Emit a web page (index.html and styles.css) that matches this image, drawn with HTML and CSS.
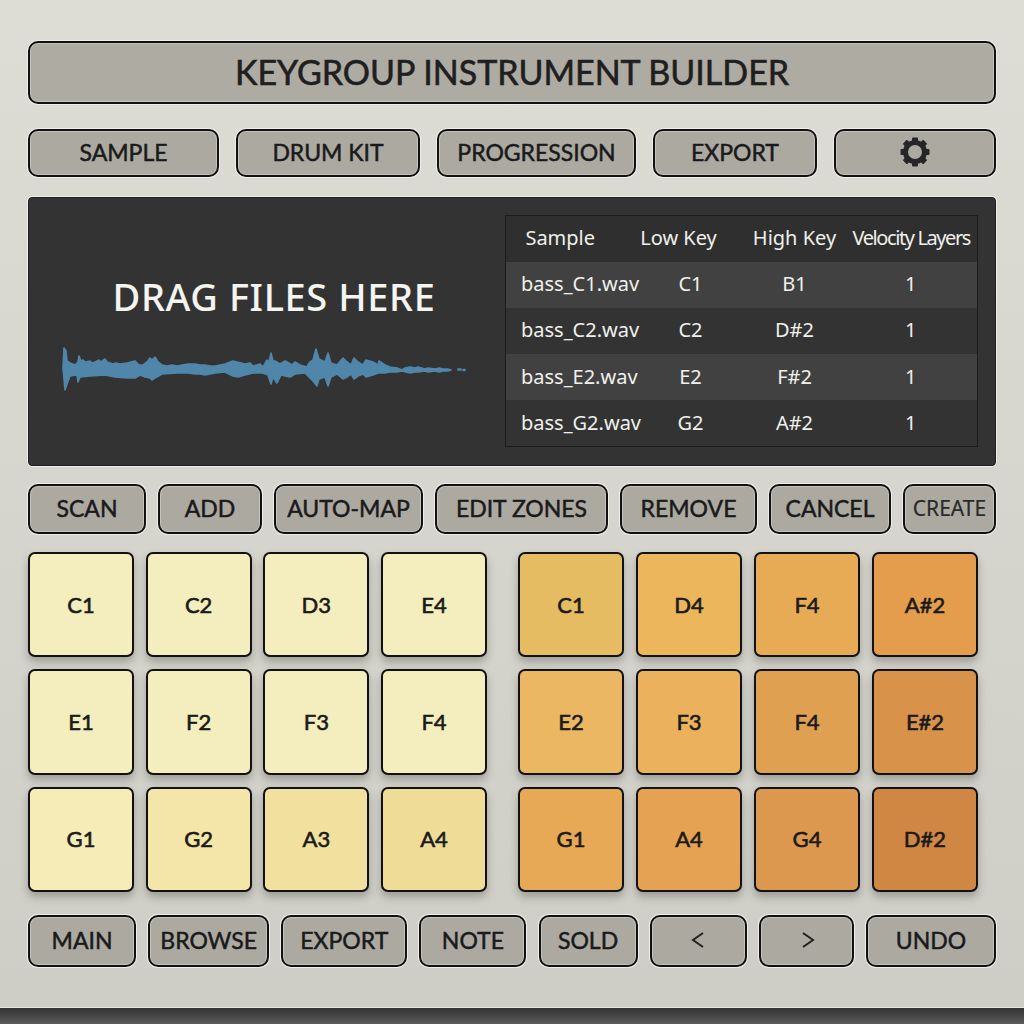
FILE: index.html
```html
<!DOCTYPE html>
<html lang="en">

<head>
  <meta charset="UTF-8">
  <meta name="viewport" content="width=device-width, initial-scale=1.0">
  <title>Keygroup Instrument Builder</title>
  <link rel="stylesheet" href="styles.css">
</head>

<body>
  <div id="whole">
    <h1 class="title">KEYGROUP INSTRUMENT BUILDER</h1>

    <div class="btn-row row-top">
      <button class="btn w-sample">SAMPLE</button>
      <button class="btn w-drum">DRUM KIT</button>
      <button class="btn w-prog">PROGRESSION</button>
      <button class="btn w-export">EXPORT</button>
      <button class="btn w-gear" aria-label="Settings">
        <svg class="gear" viewBox="0 0 30 30" width="30" height="30">
          <circle cx="15" cy="15" r="9.5" fill="none" stroke="#262626" stroke-width="5" />
          <g fill="#262626">
            <rect x="12" y="0.5" width="6" height="6" rx="1" />
            <rect x="12" y="0.5" width="6" height="6" rx="1" transform="rotate(45 15 15)" />
            <rect x="12" y="0.5" width="6" height="6" rx="1" transform="rotate(90 15 15)" />
            <rect x="12" y="0.5" width="6" height="6" rx="1" transform="rotate(135 15 15)" />
            <rect x="12" y="0.5" width="6" height="6" rx="1" transform="rotate(180 15 15)" />
            <rect x="12" y="0.5" width="6" height="6" rx="1" transform="rotate(225 15 15)" />
            <rect x="12" y="0.5" width="6" height="6" rx="1" transform="rotate(270 15 15)" />
            <rect x="12" y="0.5" width="6" height="6" rx="1" transform="rotate(315 15 15)" />
          </g>
        </svg>
      </button>
    </div>

    <div class="screen">
      <div class="drop">
        <div class="drop-text">DRAG FILES HERE</div>
        <svg class="wave" viewBox="0 0 420 56" width="420" height="56">
          <path fill="#4f86a9" stroke="#4f86a9" stroke-width="1.6" stroke-linejoin="round" d="M8 28 L9 8 L11 11 L12 21 L15 23 L20 25 L23 22 L24 16 L26 21 L28 20 L30 22 L35 21 L37 23 L40 22 L44 20 L46 22 L50 19 L52 22 L58 24 L61 23 L65 24 L72 23 L80 21 L84 25 L88 25 L92 22 L95 18 L97 20 L100 17 L103 22 L107 25 L112 26 L117 25 L122 26 L133 24 L140 24 L145 25 L150 25 L155 26 L160 26 L170 24 L178 21 L182 22 L190 24 L195 23 L198 26 L205 24 L208 27 L212 20 L214 22 L216 13 L218 21 L220 21 L225 24 L230 21 L232 22 L237 25 L240 22 L245 25 L252 27 L254 23 L258 20 L261 9 L264 19 L270 22 L273 13 L276 23 L282 25 L288 18 L292 22 L296 25 L299 18 L303 22 L308 25 L311 20 L318 22 L323 25 L324 21 L330 25 L335 27 L342 28 L347 30 L350 28 L355 27 L360 28 L363 27 L370 29 L373 28 L380 29 L384 28 L388 29 L393 29 L396 30 L393 31 L388 31 L384 32 L380 31 L373 32 L370 31 L363 32 L360 32 L355 33 L347 31 L342 32 L335 32 L330 33 L323 33 L318 35 L311 37 L308 34 L303 36 L299 39 L296 34 L292 37 L288 39 L282 34 L276 37 L273 46 L270 37 L264 39 L262 46 L258 41 L253 36 L250 33 L240 34 L235 37 L226 35 L222 43 L218 37 L216 44 L213 35 L208 33 L198 33 L190 35 L183 37 L178 36 L170 32 L160 33 L155 34 L150 35 L145 34 L140 34 L133 33 L122 33 L107 34 L100 38 L97 40 L95 38 L90 37 L85 35 L80 38 L72 38 L60 37 L50 35 L35 36 L25 37 L23 42 L22 35 L15 36 L12 44 L10 50 Z M403 29 h3 v1 h-3 Z M408 29.5 h2 v1 h-2 Z" />
        </svg>
      </div>

      <table class="samples">
        <thead>
          <tr>
            <th class="col-name">Sample</th>
            <th class="col-key">Low Key</th>
            <th class="col-key">High Key</th>
            <th class="col-vel">Velocity Layers</th>
          </tr>
        </thead>
        <tbody>
          <tr>
            <td class="cell-name">bass_C1.wav</td>
            <td class="cell-low">C1</td>
            <td class="cell-high">B1</td>
            <td class="cell-vel">1</td>
          </tr>
          <tr>
            <td class="cell-name">bass_C2.wav</td>
            <td class="cell-low">C2</td>
            <td class="cell-high">D#2</td>
            <td class="cell-vel">1</td>
          </tr>
          <tr>
            <td class="cell-name">bass_E2.wav</td>
            <td class="cell-low">E2</td>
            <td class="cell-high">F#2</td>
            <td class="cell-vel">1</td>
          </tr>
          <tr>
            <td class="cell-name">bass_G2.wav</td>
            <td class="cell-low">G2</td>
            <td class="cell-high">A#2</td>
            <td class="cell-vel">1</td>
          </tr>
        </tbody>
      </table>
    </div>

    <div class="btn-row row-mid">
      <button class="btn w-scan">SCAN</button>
      <button class="btn w-add">ADD</button>
      <button class="btn w-auto">AUTO-MAP</button>
      <button class="btn w-edit">EDIT ZONES</button>
      <button class="btn w-remove">REMOVE</button>
      <button class="btn w-cancel">CANCEL</button>
      <button class="btn w-create create">CREATE</button>
    </div>

    <div class="pads">
      <div class="pad-grid pad-left">
        <div class="pad y1">C1</div>
        <div class="pad y1">C2</div>
        <div class="pad y1">D3</div>
        <div class="pad y1">E4</div>
        <div class="pad y1">E1</div>
        <div class="pad y1">F2</div>
        <div class="pad y1">F3</div>
        <div class="pad y1">F4</div>
        <div class="pad y2">G1</div>
        <div class="pad y3">G2</div>
        <div class="pad y4">A3</div>
        <div class="pad y5">A4</div>
      </div>
      <div class="pad-grid">
        <div class="pad o1">C1</div>
        <div class="pad o2">D4</div>
        <div class="pad o3">F4</div>
        <div class="pad o4">A#2</div>
        <div class="pad o5">E2</div>
        <div class="pad o6">F3</div>
        <div class="pad o7">F4</div>
        <div class="pad o8">E#2</div>
        <div class="pad o9">G1</div>
        <div class="pad o10">A4</div>
        <div class="pad o11">G4</div>
        <div class="pad o12">D#2</div>
      </div>
    </div>

    <div class="btn-row row-bottom">
      <button class="btn w-main">MAIN</button>
      <button class="btn w-browse">BROWSE</button>
      <button class="btn w-export2">EXPORT</button>
      <button class="btn w-note">NOTE</button>
      <button class="btn w-sold">SOLD</button>
      <button class="btn w-prev">
        <svg viewBox="0 0 14 18" width="14" height="18"><path d="M12 2 L2 9 L12 16" fill="none" stroke="#222" stroke-width="2" /></svg>
      </button>
      <button class="btn w-next">
        <svg viewBox="0 0 14 18" width="14" height="18"><path d="M2 2 L12 9 L2 16" fill="none" stroke="#222" stroke-width="2" /></svg>
      </button>
      <button class="btn w-undo">UNDO</button>
    </div>
  </div>
</body>

</html>
```

FILE: styles.css
```css
* {
  box-sizing: border-box;
}

body {
  margin: 0;
  height: 1024px;
  overflow: hidden;
  font-family: "Noto Sans", sans-serif;
  background: linear-gradient(to top, #5c5c5c, #333 16px);
}

#whole {
  height: 1008px;
  padding: 41px 28px 0;
  background: linear-gradient(#dddcd5, #cfcec6);
  border-bottom: 1px solid #e8e7e0;
}

.title {
  height: 63px;
  margin: 0 0 25px;
  padding-bottom: 3px;
  display: flex;
  align-items: center;
  justify-content: center;
  font-family: Lato, sans-serif;
  font-size: 34px;
  font-weight: 400;
  -webkit-text-stroke: 0.6px #1f1f1f;
  color: #1f1f1f;
  background-color: #aeaba2;
  border: 2px solid #111;
  border-radius: 10px;
  box-shadow: 0 0 0 1px #efeee8, inset 0 0 0 1px #c6c3ba;
}

.btn-row {
  display: flex;
  justify-content: space-between;
}

.row-top {
  height: 48px;
  margin-bottom: 20px;
}

.row-mid {
  height: 50px;
  margin-bottom: 18px;
}

.row-bottom {
  height: 52px;
}

.btn {
  display: flex;
  align-items: center;
  justify-content: center;
  padding: 0 0 2px;
  font-family: Lato, sans-serif;
  font-size: 23px;
  font-weight: 400;
  -webkit-text-stroke: 0.5px #1a1a1a;
  color: #1a1a1a;
  background-color: #aca9a1;
  border: 2px solid #111;
  border-radius: 10px;
  box-shadow: 0 0 0 1px #efeee8, inset 0 0 0 1px #c6c3ba;
}

.create {
  font-family: "Noto Sans", sans-serif;
  font-size: 21px;
  -webkit-text-stroke: 0.2px #2a2a2a;
  color: #2a2a2a;
}

.w-sample { width: 191px; }
.w-drum { width: 184px; }
.w-prog { width: 199px; }
.w-export { width: 164px; }
.w-gear { width: 162px; }

.w-scan { width: 118px; }
.w-add { width: 104px; }
.w-auto { width: 149px; }
.w-edit { width: 173px; }
.w-remove { width: 137px; }
.w-cancel { width: 122px; }
.w-create { width: 93px; }

.w-main { width: 108px; }
.w-browse { width: 121px; }
.w-export2 { width: 126px; }
.w-note { width: 107px; }
.w-sold { width: 99px; }
.w-prev { width: 97px; }
.w-next { width: 95px; padding-left: 3px; }
.w-undo { width: 130px; }

.screen {
  height: 269px;
  margin-bottom: 18px;
  padding: 17px 17px 18px 0;
  display: flex;
  justify-content: space-between;
  background-color: #333;
  border: 1px solid #1f1f1f;
  border-radius: 4px;
  box-shadow: 0 0 0 1px #efeee8;
}

.drop {
  width: 476px;
  padding-top: 59px;
}

.drop-text {
  margin-bottom: 22px;
  padding-left: 14px;
  font-size: 38px;
  font-weight: 500;
  line-height: 44px;
  text-align: center;
  color: #f4f4f0;
  letter-spacing: 0.6px;
}

.wave {
  display: block;
  margin-left: 26px;
}

.samples {
  width: 473px;
  height: 232px;
  table-layout: fixed;
  border-collapse: collapse;
  border: 1px solid #1c1c1c;
  color: #f0f0ec;
  font-size: 20px;
  white-space: nowrap;
}

.samples th {
  height: 46px;
  padding: 0 0 2px;
  font-weight: 400;
  background-color: #2f2f2f;
}

.samples td {
  height: 46px;
  padding: 0 0 2px;
  text-align: center;
}

.samples tbody tr:nth-child(odd) {
  background-color: #414141;
}

.samples tbody tr:nth-child(even) {
  background-color: #333;
}

.samples .col-name {
  width: 115px;
  padding-right: 6px;
}

.col-key {
  width: 116px;
}

.samples .col-vel {
  padding-right: 8px;
  letter-spacing: -1.4px;
}

.samples .cell-name {
  text-align: left;
  padding-left: 15px;
}

.samples .cell-low {
  padding-left: 24px;
}

.samples .cell-vel {
  padding-right: 8px;
}

.pads {
  height: 340px;
  margin-bottom: 23px;
  display: flex;
  justify-content: space-between;
  padding-right: 18px;
}

.pad-grid {
  width: 460px;
  display: grid;
  grid-template-columns: repeat(4, 1fr);
  grid-template-rows: repeat(3, 1fr);
  gap: 12px;
}

.pad-left {
  width: 459px;
  column-gap: 11.67px;
}

.pad {
  display: flex;
  align-items: center;
  justify-content: center;
  padding-bottom: 1px;
  font-family: Lato, sans-serif;
  font-size: 22px;
  font-weight: 400;
  -webkit-text-stroke: 0.6px #1a1a1a;
  color: #1a1a1a;
  border: 2px solid #111;
  border-radius: 7px;
  box-shadow: 0 5px 8px rgba(0, 0, 0, 0.25);
}

.y1 { background-color: #f4edbd; }
.y2 { background-color: #f5ecb8; }
.y3 { background-color: #f4e5a8; }
.y4 { background-color: #f1e09e; }
.y5 { background-color: #efdc96; }

.o1 { background-color: #e5bc62; }
.o2 { background-color: #ecb65c; }
.o3 { background-color: #e7ab55; }
.o4 { background-color: #e39d4c; }
.o5 { background-color: #ecb763; }
.o6 { background-color: #ebb15d; }
.o7 { background-color: #e0a052; }
.o8 { background-color: #d9924a; }
.o9 { background-color: #e7a956; }
.o10 { background-color: #e4a252; }
.o11 { background-color: #dd9850; }
.o12 { background-color: #d08744; }
```
